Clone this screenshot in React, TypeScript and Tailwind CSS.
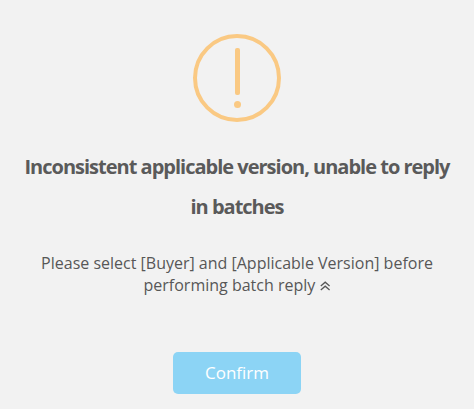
function WarningIcon() {
  return (
    <div
      aria-hidden="true"
      className="flex size-[88px] shrink-0 flex-col items-center rounded-full border-4 border-[#fac983] pt-[10px]"
    >
      <span className="h-[47px] w-[5px] rounded-[2px] bg-[#fac983]" />
      <span className="mt-[6px] size-[7px] rounded-full bg-[#fac983]" />
    </div>
  );
}

function DoubleChevronUp() {
  return (
    <svg
      aria-hidden="true"
      viewBox="0 0 10 10"
      fill="none"
      stroke="currentColor"
      strokeWidth="1.3"
      className="ml-px inline-block size-[10px] align-[0px]"
    >
      <path d="M0.8 5 5.2 1.2 9.6 5M0.8 9 5.2 5.2 9.6 9" />
    </svg>
  );
}

export default function App() {
  return (
    <div
      role="alertdialog"
      aria-labelledby="dialog-title"
      className="flex h-[409px] w-[474px] flex-col items-center overflow-hidden bg-[#f2f2f2] pt-[34px] text-center font-['Open_Sans',sans-serif]"
    >
      <WarningIcon />

      <h2
        id="dialog-title"
        className="mt-[25px] text-[20px] leading-[40px] font-bold tracking-[-1px] text-[#5a5a5a]"
      >
        Inconsistent applicable version, unable to reply
        <br />
        in batches
      </h2>

      <p className="mt-[25px] text-[16px] leading-[22px] font-normal text-[#575757]">
        Please select [Buyer] and [Applicable Version] before
        <br />
        performing batch reply <DoubleChevronUp />
      </p>

      <button
        type="button"
        className="mt-[56px] h-[42px] w-[128px] rounded-[5px] bg-[#8cd4f5] text-[17px] font-medium text-white"
      >
        Confirm
      </button>
    </div>
  );
}
